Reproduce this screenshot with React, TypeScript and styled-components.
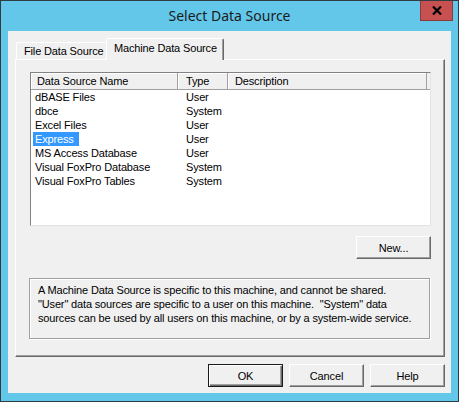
import { createGlobalStyle, styled } from 'styled-components';

const GlobalStyle = createGlobalStyle`
    html, body {
        margin: 0;
        padding: 0;
        background: #f0f0f0;
    }
    * {
        box-sizing: border-box;
    }
`;

type Source = {
    name: string;
    type: string;
    selected?: boolean;
};

const sources: Source[] = [
    { name: 'dBASE Files', type: 'User' },
    { name: 'dbce', type: 'System' },
    { name: 'Excel Files', type: 'User' },
    { name: 'Express', type: 'User', selected: true },
    { name: 'MS Access Database', type: 'User' },
    { name: 'Visual FoxPro Database', type: 'System' },
    { name: 'Visual FoxPro Tables', type: 'System' },
];

export default function App() {
    return (
        <>
            <GlobalStyle />
            <Window>
                <TitleBar>
                    <span />
                    <Title>Select Data Source</Title>
                    <CloseButton aria-label='Close'>
                        <svg width='10' height='9' viewBox='0 0 10 9'>
                            <path
                                d='M1 0.5 L9 8.5 M9 0.5 L1 8.5'
                                stroke='#000'
                                strokeWidth='2.2'
                                fill='none'
                            />
                        </svg>
                    </CloseButton>
                </TitleBar>
                <Client>
                    <TabStrip>
                        <Tab>File Data Source</Tab>
                        <Tab $active>Machine Data Source</Tab>
                    </TabStrip>
                    <TabPanel>
                        <ListView>
                            <HeaderRow>
                                <HeaderCell $pad={6}>Data Source Name</HeaderCell>
                                <HeaderCell $pad={8}>Type</HeaderCell>
                                <HeaderCell $pad={7}>Description</HeaderCell>
                            </HeaderRow>
                            {sources.map((s) => (
                                <Row key={s.name}>
                                    <NameCell>
                                        <Label $selected={s.selected}>{s.name}</Label>
                                    </NameCell>
                                    <TypeCell>{s.type}</TypeCell>
                                    <span />
                                </Row>
                            ))}
                        </ListView>
                        <ButtonRow>
                            <Button>New...</Button>
                        </ButtonRow>
                        <InfoBox>
                            A Machine Data Source is specific to this machine, and cannot be shared.
                            <br />
                            "User" data sources are specific to a user on this machine.{'\u00a0 '}"System" data
                            <br />
                            sources can be used by all users on this machine, or by a system-wide service.
                        </InfoBox>
                    </TabPanel>
                    <DialogButtons>
                        <Button $default>OK</Button>
                        <Button>Cancel</Button>
                        <Button>Help</Button>
                    </DialogButtons>
                </Client>
            </Window>
        </>
    );
}

const Window = styled.div`
    width: 459px;
    height: 402px;
    background: #63c7ea;
    border: 1px solid #2f3c42;
    display: flex;
    flex-direction: column;
    font-family: 'Liberation Sans', Arial, sans-serif;
    font-size: 11px;
    letter-spacing: -0.15px;
    color: #000;
`;

const TitleBar = styled.div`
    height: 30px;
    display: grid;
    grid-template-columns: 1fr auto 1fr;
    align-items: start;
`;

const Title = styled.div`
    font-family: 'Noto Sans', 'Open Sans', sans-serif;
    font-size: 14px;
    letter-spacing: 0;
    color: #1b1b1b;
    line-height: 28px;
    padding-top: 1px;
`;

const CloseButton = styled.div`
    justify-self: end;
    width: 33px;
    height: 20px;
    margin-right: 5px;
    background: #c75050;
    border: 1px solid #8d3a3a;
    border-top: none;
    display: flex;
    align-items: center;
    justify-content: center;
`;

const Client = styled.div`
    flex: 1;
    margin: 0 7px 8px 7px;
    background: #f0f0f0;
    padding: 7px 6px 0 7px;
    display: flex;
    flex-direction: column;
`;

const TabStrip = styled.div`
    height: 21px;
    display: flex;
    align-items: flex-end;
    padding-left: 1px;
`;

const Tab = styled.div<{ $active?: boolean }>`
    position: relative;
    z-index: ${(p) => (p.$active ? 2 : 1)};
    height: ${(p) => (p.$active ? '22px' : '17px')};
    margin-bottom: ${(p) => (p.$active ? '-1px' : '0')};
    align-self: ${(p) => (p.$active ? 'flex-start' : 'flex-end')};
    width: ${(p) => (p.$active ? '118px' : '90px')};
    padding: ${(p) => (p.$active ? '3px 0 0 7px' : '2px 0 0 7px')};
    background: #f0f0f0;
    border-top: 1px solid #fff;
    border-left: 1px solid #fff;
    border-right: ${(p) => (p.$active ? '1px solid #696969' : 'none')};
    box-shadow: ${(p) => (p.$active ? 'inset -1px 0 #a0a0a0' : 'none')};
    border-radius: 2px 2px 0 0;
    white-space: nowrap;
    line-height: 13px;
`;

const TabPanel = styled.div`
    width: 430px;
    height: 298px;
    border-top: 1px solid #fff;
    border-left: 1px solid #fff;
    border-right: 1px solid #696969;
    border-bottom: 1px solid #696969;
    box-shadow: inset -1px -1px #a0a0a0;
    padding: 12px 13px 0 14px;
    display: flex;
    flex-direction: column;
`;

const ListView = styled.div`
    width: 401px;
    height: 154px;
    background: #fff;
    border: 1px solid;
    border-color: #828282 #e3e3e3 #e3e3e3 #828282;
    overflow: hidden;
`;

const HeaderRow = styled.div`
    display: grid;
    grid-template-columns: 147px 50px 199px;
    height: 17px;
    background: #f0f0f0;
    border-bottom: 1px solid #a0a0a0;
`;

const HeaderCell = styled.div<{ $pad: number }>`
    padding-left: ${(p) => p.$pad}px;
    line-height: 16px;
    box-shadow: inset -1px 0 #a0a0a0, inset 1px 1px #fff;
    white-space: nowrap;
`;

const Row = styled.div`
    display: grid;
    grid-template-columns: 147px 50px 1fr;
    height: 14px;
    line-height: 14px;
`;

const NameCell = styled.div`
    padding-left: 2px;
    white-space: nowrap;
`;

const Label = styled.span<{ $selected?: boolean }>`
    display: inline-block;
    padding: 0 5px 0 2px;
    background: ${(p) => (p.$selected ? '#3399ff' : 'transparent')};
    color: ${(p) => (p.$selected ? '#fff' : '#000')};
`;

const TypeCell = styled.div`
    padding-left: 8px;
`;

const ButtonRow = styled.div`
    display: flex;
    justify-content: flex-end;
    margin-top: 10px;
`;

const Button = styled.div<{ $default?: boolean }>`
    width: 75px;
    height: 23px;
    display: flex;
    align-items: center;
    justify-content: center;
    background: #f0f0f0;
    border: 1px solid ${(p) => (p.$default ? '#1a1a1a' : 'transparent')};
    border-top-color: ${(p) => (p.$default ? '#1a1a1a' : '#fff')};
    border-left-color: ${(p) => (p.$default ? '#1a1a1a' : '#fff')};
    border-right-color: ${(p) => (p.$default ? '#1a1a1a' : '#696969')};
    border-bottom-color: ${(p) => (p.$default ? '#1a1a1a' : '#696969')};
    box-shadow: ${(p) =>
        p.$default
            ? 'inset 1px 1px #fff, inset -1px -1px #696969, inset -2px -2px #a0a0a0'
            : 'inset -1px -1px #a0a0a0'};
`;

const InfoBox = styled.div`
    margin-top: 19px;
    margin-left: -1px;
    width: 401px;
    height: 61px;
    border: 1px solid #a0a0a0;
    box-shadow: inset 1px 1px #fff, 1px 1px #fff;
    padding: 4px 0 0 8px;
    line-height: 14px;
    white-space: nowrap;
`;

const DialogButtons = styled.div`
    display: flex;
    justify-content: flex-end;
    gap: 6px;
    margin-top: 7px;
`;
